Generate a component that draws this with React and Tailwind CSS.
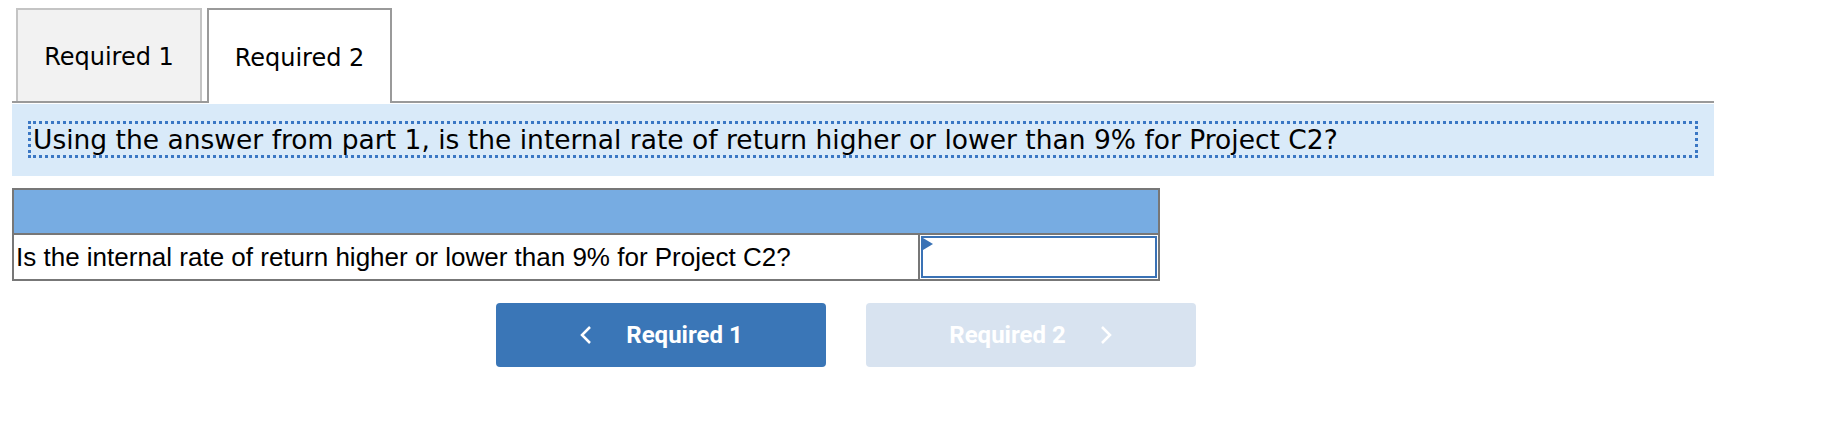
export default function App() {
  return (
    <div className="min-h-screen bg-white pt-2 pl-3">
      <div className="w-[1702px]">
        {/* tabs */}
        <div className="flex items-end gap-[5px] pl-1 border-b-2 border-[#9a9a9a]">
          <div className="flex h-[93px] w-[186px] items-center justify-center border-2 border-b-0 border-[#c4c4c4] bg-[#f2f2f2] pt-[3px] font-['DejaVu_Sans',sans-serif] text-[24px] text-black">
            Required 1
          </div>
          <div className="-mb-[2px] flex h-[95px] w-[185px] items-center justify-center border-2 border-b-0 border-[#9a9a9a] bg-white pt-[3px] font-['DejaVu_Sans',sans-serif] text-[24px] text-black">
            Required 2
          </div>
        </div>

        {/* question band */}
        <div className="mt-px bg-[#d9eaf9] px-4 pt-[17px] pb-[18px]">
          <div className="border-[3px] border-dotted border-[#3a77c4] pl-[2px] font-['DejaVu_Sans',sans-serif] text-[26.5px] leading-[31px] text-black">
            Using the answer from part 1, is the internal rate of return higher or lower than 9% for Project C2?
          </div>
        </div>
      </div>

      {/* answer table */}
      <div className="mt-3 w-[1148px] border-2 border-[#777]">
        <div className="h-[43px] bg-[#77ace2]" />
        <div className="flex h-[46px] border-t-2 border-[#777]">
          <div className="flex w-[904px] items-center pl-[2px] pt-px font-['Liberation_Sans',Arial,sans-serif] text-[26px] text-black">
            Is the internal rate of return higher or lower than 9% for Project C2?
          </div>
          <div className="flex-1 border-l-2 border-[#777] p-px">
            <div className="relative h-full border-2 border-[#3a72b5] bg-white">
              <svg className="absolute left-0 top-0" width="10" height="13" viewBox="0 0 10 13">
                <polygon points="0,0 10,6 0,12" fill="#3a72b5" />
              </svg>
            </div>
          </div>
        </div>
      </div>

      {/* nav buttons */}
      <div className="mt-[22px] ml-[484px] flex gap-10">
        <button className="flex h-16 w-[330px] items-center justify-center gap-[34px] rounded-[4px] bg-[#3a76b7] font-['Roboto',sans-serif] text-[24px] font-bold text-white">
          <svg width="13" height="18" viewBox="0 0 13 18" fill="none">
            <polyline points="11,1 3,9 11,17" stroke="white" strokeWidth="2.5" />
          </svg>
          <span>Required 1</span>
        </button>
        <button className="flex h-16 w-[330px] items-center justify-center gap-[34px] rounded-[4px] bg-[#d8e3f0] font-['Roboto',sans-serif] text-[24px] font-bold text-white">
          <span>Required 2</span>
          <svg width="13" height="18" viewBox="0 0 13 18" fill="none">
            <polyline points="2,1 10,9 2,17" stroke="white" strokeWidth="2.5" />
          </svg>
        </button>
      </div>
    </div>
  );
}
